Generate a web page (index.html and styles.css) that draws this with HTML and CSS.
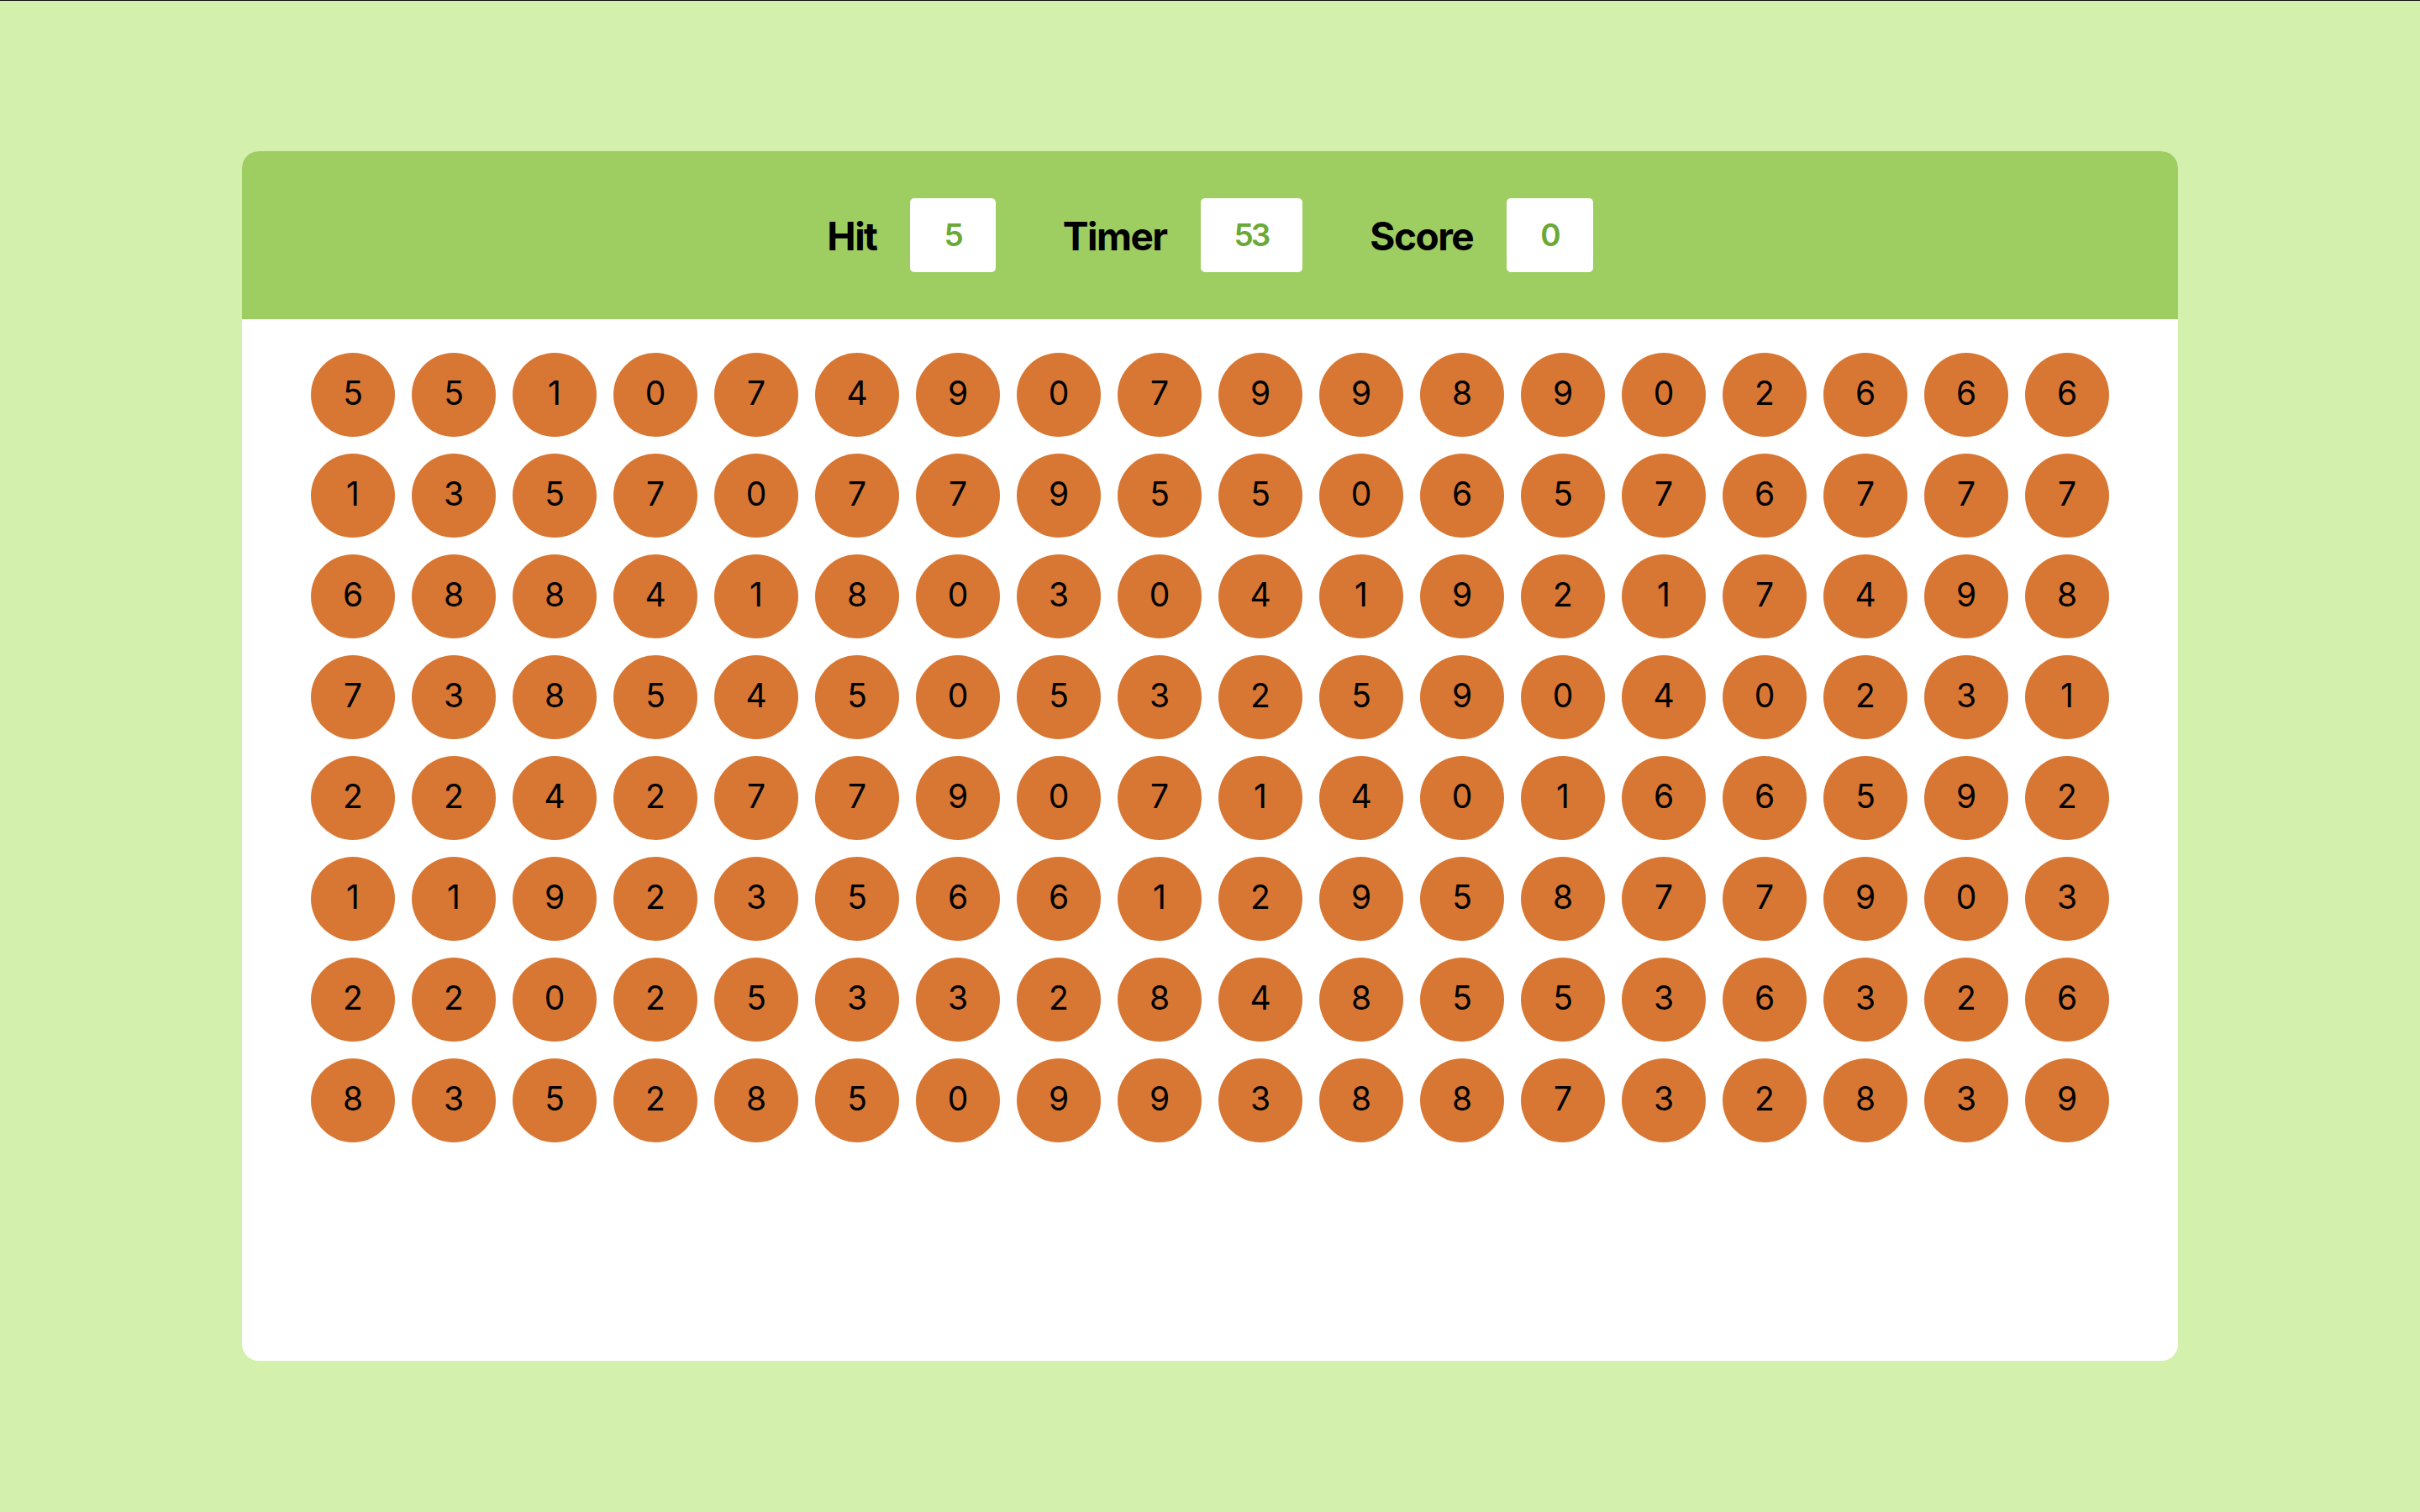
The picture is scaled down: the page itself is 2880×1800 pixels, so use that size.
FILE: index.html
```html
<!DOCTYPE html>
<html lang="en">
<head>
<meta charset="utf-8">
<title>Bubble Game</title>
<link rel="stylesheet" href="styles.css">
</head>
<body>
<main class="panel">
  <header class="top">
    <div class="stat"><h2 class="label">Hit</h2><div class="box">5</div></div>
    <div class="stat"><h2 class="label">Timer</h2><div class="box">53</div></div>
    <div class="stat"><h2 class="label">Score</h2><div class="box">0</div></div>
  </header>
  <section class="bottom">
    <div class="bubble">5</div><div class="bubble">5</div><div class="bubble">1</div><div class="bubble">0</div><div class="bubble">7</div><div class="bubble">4</div><div class="bubble">9</div><div class="bubble">0</div><div class="bubble">7</div><div class="bubble">9</div><div class="bubble">9</div><div class="bubble">8</div><div class="bubble">9</div><div class="bubble">0</div><div class="bubble">2</div><div class="bubble">6</div><div class="bubble">6</div><div class="bubble">6</div>
    <div class="bubble">1</div><div class="bubble">3</div><div class="bubble">5</div><div class="bubble">7</div><div class="bubble">0</div><div class="bubble">7</div><div class="bubble">7</div><div class="bubble">9</div><div class="bubble">5</div><div class="bubble">5</div><div class="bubble">0</div><div class="bubble">6</div><div class="bubble">5</div><div class="bubble">7</div><div class="bubble">6</div><div class="bubble">7</div><div class="bubble">7</div><div class="bubble">7</div>
    <div class="bubble">6</div><div class="bubble">8</div><div class="bubble">8</div><div class="bubble">4</div><div class="bubble">1</div><div class="bubble">8</div><div class="bubble">0</div><div class="bubble">3</div><div class="bubble">0</div><div class="bubble">4</div><div class="bubble">1</div><div class="bubble">9</div><div class="bubble">2</div><div class="bubble">1</div><div class="bubble">7</div><div class="bubble">4</div><div class="bubble">9</div><div class="bubble">8</div>
    <div class="bubble">7</div><div class="bubble">3</div><div class="bubble">8</div><div class="bubble">5</div><div class="bubble">4</div><div class="bubble">5</div><div class="bubble">0</div><div class="bubble">5</div><div class="bubble">3</div><div class="bubble">2</div><div class="bubble">5</div><div class="bubble">9</div><div class="bubble">0</div><div class="bubble">4</div><div class="bubble">0</div><div class="bubble">2</div><div class="bubble">3</div><div class="bubble">1</div>
    <div class="bubble">2</div><div class="bubble">2</div><div class="bubble">4</div><div class="bubble">2</div><div class="bubble">7</div><div class="bubble">7</div><div class="bubble">9</div><div class="bubble">0</div><div class="bubble">7</div><div class="bubble">1</div><div class="bubble">4</div><div class="bubble">0</div><div class="bubble">1</div><div class="bubble">6</div><div class="bubble">6</div><div class="bubble">5</div><div class="bubble">9</div><div class="bubble">2</div>
    <div class="bubble">1</div><div class="bubble">1</div><div class="bubble">9</div><div class="bubble">2</div><div class="bubble">3</div><div class="bubble">5</div><div class="bubble">6</div><div class="bubble">6</div><div class="bubble">1</div><div class="bubble">2</div><div class="bubble">9</div><div class="bubble">5</div><div class="bubble">8</div><div class="bubble">7</div><div class="bubble">7</div><div class="bubble">9</div><div class="bubble">0</div><div class="bubble">3</div>
    <div class="bubble">2</div><div class="bubble">2</div><div class="bubble">0</div><div class="bubble">2</div><div class="bubble">5</div><div class="bubble">3</div><div class="bubble">3</div><div class="bubble">2</div><div class="bubble">8</div><div class="bubble">4</div><div class="bubble">8</div><div class="bubble">5</div><div class="bubble">5</div><div class="bubble">3</div><div class="bubble">6</div><div class="bubble">3</div><div class="bubble">2</div><div class="bubble">6</div>
    <div class="bubble">8</div><div class="bubble">3</div><div class="bubble">5</div><div class="bubble">2</div><div class="bubble">8</div><div class="bubble">5</div><div class="bubble">0</div><div class="bubble">9</div><div class="bubble">9</div><div class="bubble">3</div><div class="bubble">8</div><div class="bubble">8</div><div class="bubble">7</div><div class="bubble">3</div><div class="bubble">2</div><div class="bubble">8</div><div class="bubble">3</div><div class="bubble">9</div>
  </section>
</main>
</body>
</html>
```

FILE: styles.css
```css
* {
  margin: 0;
  padding: 0;
  box-sizing: border-box;
}

html, body {
  width: 100%;
  height: 100%;
}

body {
  background: #d3f0ad;
  box-shadow: inset 0 1px 0 #111;
  display: flex;
  align-items: center;
  justify-content: center;
  font-family: "Inter", "Lato", sans-serif;
}

.panel {
  width: 80%;
  height: 80%;
  background: #ffffff;
  border-radius: 20px;
  overflow: hidden;
}

.top {
  height: 200px;
  background: #9ecd61;
  display: flex;
  align-items: center;
  justify-content: center;
  gap: 80px;
}

.stat {
  display: flex;
  align-items: center;
  gap: 40px;
}

.label {
  font-size: 46px;
  font-weight: 700;
  color: #000;
  letter-spacing: -1.5px;
  padding-top: 2px;
}

.box {
  background: #fff;
  border-radius: 5px;
  padding: 20px 41px 20px 40px;
  font-size: 37px;
  line-height: 48px;
  font-weight: 600;
  color: #6aa935;
  letter-spacing: -3px;
}

.bottom {
  height: calc(100% - 200px);
  padding: 40px 82px 0;
  display: flex;
  flex-wrap: wrap;
  justify-content: center;
  align-content: flex-start;
  gap: 20px;
}

.bubble {
  width: 100px;
  height: 100px;
  border-radius: 50%;
  background: #d87733;
  display: flex;
  align-items: center;
  justify-content: center;
  font-size: 39px;
  font-weight: 400;
  color: #000;
  padding-bottom: 6px;
}
```
